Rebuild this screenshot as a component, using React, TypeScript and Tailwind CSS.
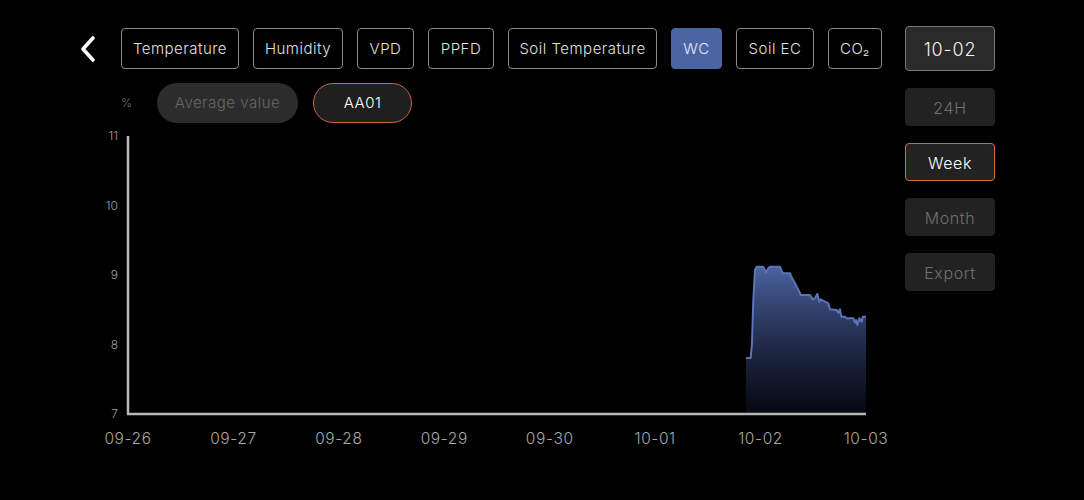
import React from 'react';

const metrics = [
  { name: 'Temperature', w: 'w-[118px]' },
  { name: 'Humidity', w: 'w-[90px]' },
  { name: 'VPD', w: 'w-[57px]' },
  { name: 'PPFD', w: 'w-[66px]' },
  { name: 'Soil Temperature', w: 'w-[149px]' },
  { name: 'WC', w: 'w-[51px]', active: true },
  { name: 'Soil EC', w: 'w-[78px]' },
  { name: 'CO₂', w: 'w-[54px]' },
];

const ranges = [
  { name: '24H' },
  { name: 'Week', active: true },
  { name: 'Month' },
  { name: 'Export' },
];

// chart geometry, in page pixels
const X0 = 128;
const X1 = 866;
const Y_TOP = 136;
const Y_BOTTOM = 414;
const yTicks = [11, 10, 9, 8, 7];
const xTicks = ['09-26', '09-27', '09-28', '09-29', '09-30', '10-01', '10-02', '10-03'];

const valueToY = (v: number) => Y_BOTTOM - ((v - 7) / 4) * (Y_BOTTOM - Y_TOP);

const points: [number, number][] = [
  [746, 358], [750.7, 358], [752, 343], [753.3, 300], [755, 270], [756.7, 266.7],
  [763.3, 266.7], [766, 272.7], [768.3, 268.3], [770, 266.7], [780, 266.7], [782.7, 273.3],
  [790, 273.3], [792.7, 279.3], [795, 283.3], [796.7, 286.7], [799.3, 291.7], [800.7, 295],
  [810, 295], [812.7, 299.3], [815, 298.3], [817.3, 294], [819.3, 301.7], [820.7, 299.3],
  [828.3, 303.3], [830, 309.3], [836.7, 310], [838.3, 312.7], [840, 309.3], [841.3, 316.7],
  [845, 316.7], [846.7, 318.3], [853.3, 318.3], [855, 322.7], [856, 320], [857.3, 325],
  [859.3, 318.3], [861.7, 321.7], [862.7, 316.7], [866, 316.7],
];

function Chart() {
  const line = points.map(([x, y], i) => `${i === 0 ? 'M' : 'L'}${x},${y}`).join(' ');
  const area = `${line} L866,${Y_BOTTOM} L746,${Y_BOTTOM} Z`;

  return (
    <svg width={785} height={322} className="mt-[6px] ml-[17px] block overflow-visible">
      <defs>
        <linearGradient id="wcFill" x1="0" y1="0" x2="0" y2="1">
          <stop offset="0%" stopColor="#4e67a8" stopOpacity="0.95" />
          <stop offset="100%" stopColor="#0b0f1e" stopOpacity="0.6" />
        </linearGradient>
      </defs>
      <g transform="translate(-95,-129)">
        {yTicks.map((v) => (
          <text
            key={v}
            x={118}
            y={valueToY(v) + 4}
            textAnchor="end"
            fontSize={12}
            fill="#a0a0a0"
            fontWeight={300}
            fontFamily="Inter, 'Liberation Sans', sans-serif"
          >
            {v}
          </text>
        ))}
        <path d={area} fill="url(#wcFill)" />
        <path d={line} fill="none" stroke="#5b74b8" strokeWidth={2} strokeLinejoin="round" />
        <line x1={X0} y1={Y_TOP} x2={X0} y2={Y_BOTTOM} stroke="#b8b8b8" strokeWidth={2.5} />
        <line x1={X0 - 1} y1={Y_BOTTOM} x2={X1} y2={Y_BOTTOM} stroke="#b8b8b8" strokeWidth={2.5} />
        {xTicks.map((t, i) => (
          <text
            key={t}
            x={X0 + (i * (X1 - X0)) / 7}
            y={444}
            textAnchor="middle"
            fontSize={15.5}
            fill="#a8a8a8"
            fontWeight={300}
            letterSpacing={0.6}
            fontFamily="Inter, 'Liberation Sans', sans-serif"
          >
            {t}
          </text>
        ))}
      </g>
    </svg>
  );
}

export default function App() {
  return (
    <div className="flex h-[500px] w-[1084px] bg-black pt-[26px] pl-[78px] font-['Inter','Liberation_Sans',sans-serif] font-[350] text-white">
      <div className="flex w-[804px] flex-col">
        <div className="flex h-[45px] items-center">
          <svg width={22} height={28} viewBox="0 0 22 28" className="mr-[21px]">
            <path d="M15 3 L5 14 L15 25" fill="none" stroke="#ffffff" strokeWidth={3.6} strokeLinecap="round" strokeLinejoin="round" />
          </svg>
          <div className="flex gap-[14px]">
            {metrics.map((m) => (
              <div
                key={m.name}
                className={`flex h-[41px] items-center justify-center rounded-[4px] border pt-[1px] text-[15px] tracking-[0.5px] ${m.w} ${
                  m.active ? 'border-[#4b64a3] bg-[#4b64a3] text-[#e6ebf5]' : 'border-[#8a8a8a] text-[#e0e0e0]'
                }`}
              >
                {m.name}
              </div>
            ))}
          </div>
        </div>

        <div className="mt-[12px] flex h-[40px] items-center pl-[43px]">
          <span className="w-[36px] text-[12px] font-light text-[#777]">%</span>
          <div className="flex h-[40px] w-[141px] items-center justify-center rounded-full bg-[#2c2c2c] pt-[1px] text-[15px] tracking-[0.5px] text-[#666]">
            Average value
          </div>
          <div className="ml-[15px] flex h-[40px] w-[99px] items-center justify-center rounded-full border border-[#c06b48] bg-[#1f1f1f] pt-[1px] text-[15px] tracking-[0.5px] text-white">
            AA01
          </div>
        </div>

        <Chart />
      </div>

      <div className="ml-[23px] flex w-[90px] flex-col gap-[17px]">
        <div className="flex h-[45px] items-center justify-center rounded-[4px] border border-[#7a7a7a] bg-[#2a2a2a] pt-[1px] text-[18px] tracking-[0.8px] text-[#f0f0f0]">
          10-02
        </div>
        {ranges.map((r) => (
          <div
            key={r.name}
            className={`flex h-[38px] items-center justify-center rounded-[4px] border pt-[1px] text-[16px] tracking-[0.6px] ${
              r.active ? 'border-[#d06a3c] bg-[#222] text-white' : 'border-[#222] bg-[#222] text-[#707070]'
            }`}
          >
            {r.name}
          </div>
        ))}
      </div>
    </div>
  );
}
